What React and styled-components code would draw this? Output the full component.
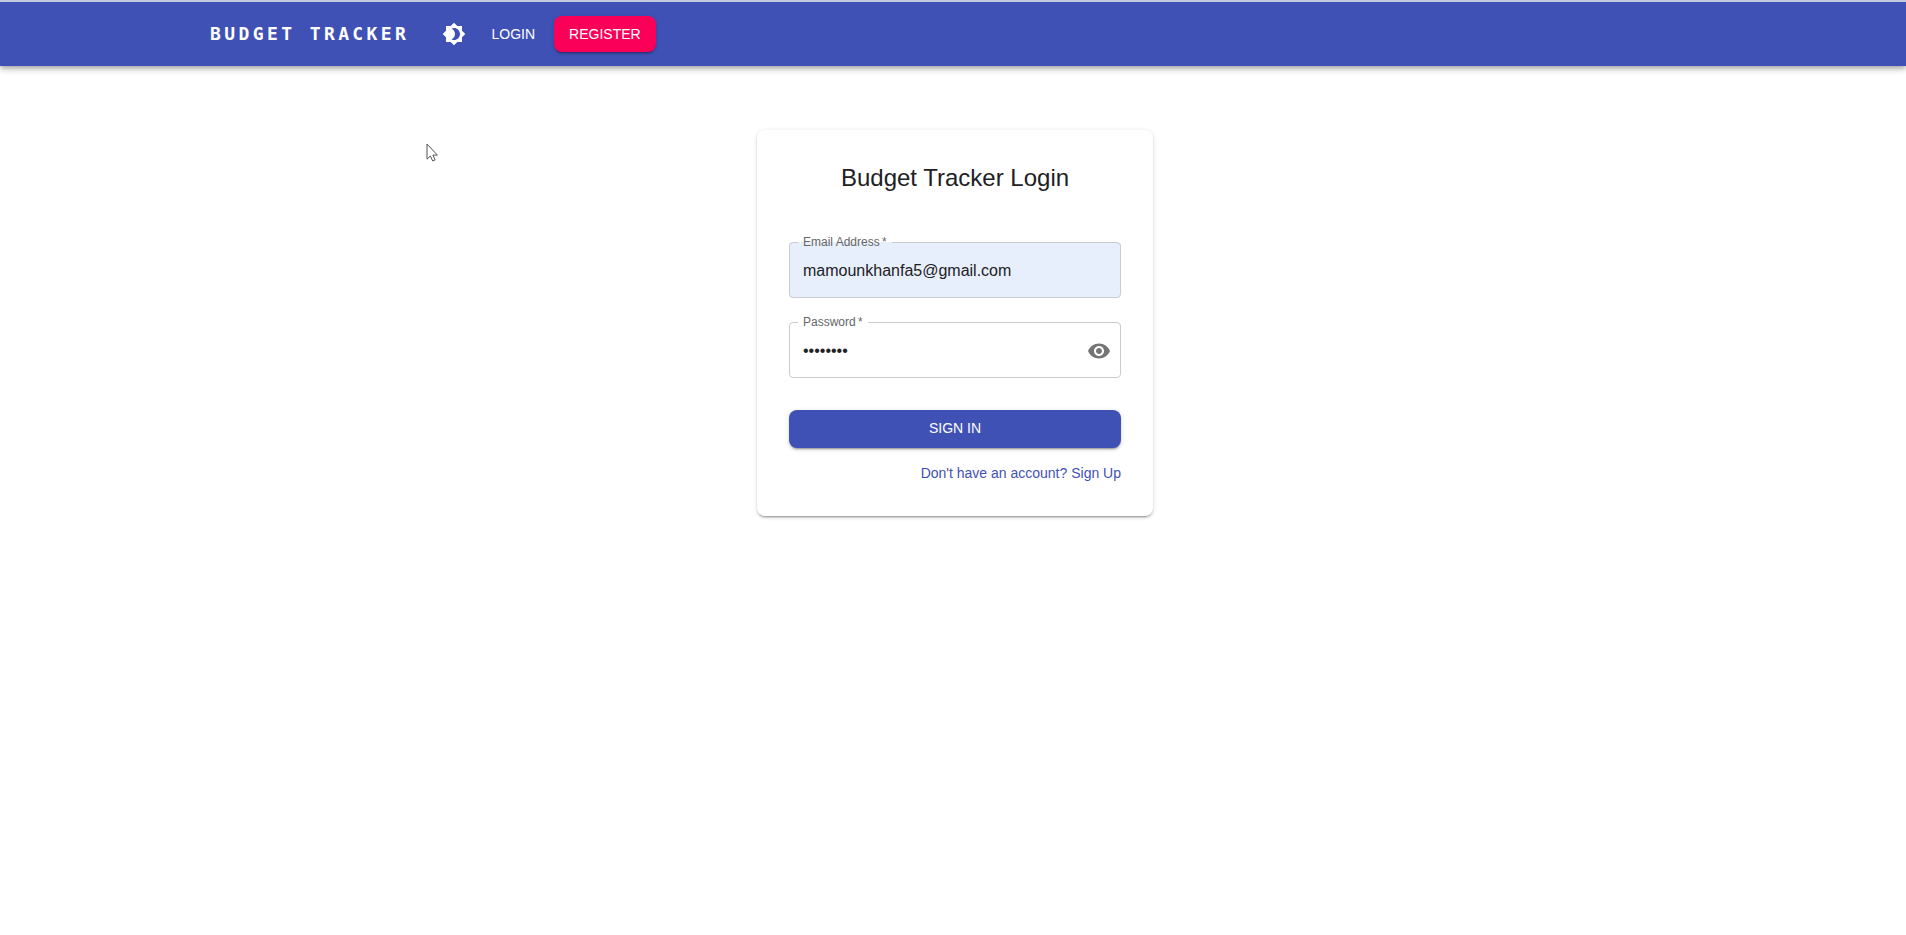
import React, { useState } from 'react'
import styled, { createGlobalStyle, ThemeProvider } from 'styled-components'
import { MdBrightness4, MdVisibility } from 'react-icons/md'

const theme = {
    colors: {
        primary: '#3f51b5',
        secondary: '#fb0058',
        text: '#212124',
        label: '#666668',
        border: '#c9cbd0',
        autofill: '#e8effc',
    },
    fonts: {
        body: '"Liberation Sans", Arial, sans-serif',
        logo: '"DejaVu Sans Mono", monospace',
    },
    shadow: '0 3px 1px -2px rgba(0, 0, 0, .2), 0 2px 2px rgba(0, 0, 0, .14), 0 1px 5px rgba(0, 0, 0, .12)',
}

const App = () => {
    return (
        <ThemeProvider theme={theme}>
            <GlobalStyle />
            <NavBar />
            <Main>
                <LoginForm />
            </Main>
            <Cursor viewBox="0 0 12 19">
                <path d="M1 1v15.2l3.4-3.2 2.3 5 2.4-1.1-2.2-4.8h4.5z" />
            </Cursor>
        </ThemeProvider>
    )
}

const NavBar = () => {
    return (
        <Header>
            <Logo>BUDGET TRACKER</Logo>
            <IconButton aria-label="theme"><MdBrightness4 /></IconButton>
            <NavButton>LOGIN</NavButton>
            <RegisterButton>REGISTER</RegisterButton>
        </Header>
    )
}

const LoginForm = () => {
    const [email, setEmail] = useState('mamounkhanfa5@gmail.com')
    const [password, setPassword] = useState('password')
    return (
        <Card onSubmit={e => e.preventDefault()}>
            <Title>Budget Tracker Login</Title>
            <Field $filled>
                <Label>Email Address&thinsp;*</Label>
                <Input value={email} onChange={e => setEmail(e.target.value)} />
            </Field>
            <Field>
                <Label>Password&thinsp;*</Label>
                <InputRow>
                    <Input type="password" value={password} onChange={e => setPassword(e.target.value)} />
                    <EyeButton type="button" aria-label="show"><MdVisibility /></EyeButton>
                </InputRow>
            </Field>
            <SubmitButton>SIGN IN</SubmitButton>
            <SignUpLink>Don't have an account? Sign Up</SignUpLink>
        </Card>
    )
}

const GlobalStyle = createGlobalStyle`
    * {
        box-sizing: border-box;
    }
    body {
        margin: 0;
        background: #fff;
        font-family: ${props => props.theme.fonts.body};
        color: ${props => props.theme.colors.text};
    }
`

const Header = styled.header`
    display: flex;
    align-items: center;
    height: 66px;
    padding-left: 210px;
    border-top: 2px solid #c5c9de;
    background: ${props => props.theme.colors.primary};
    box-shadow: 0 2px 4px -1px rgba(0, 0, 0, .2), 0 4px 5px rgba(0, 0, 0, .14), 0 1px 10px rgba(0, 0, 0, .12);
`

const Logo = styled.div`
    width: 223.5px;
    font-family: ${props => props.theme.fonts.logo};
    font-size: 18px;
    font-weight: 700;
    line-height: 28px;
    letter-spacing: 3.4px;
    white-space: nowrap;
    color: #fff;
`

const Button = styled.button`
    height: 36.5px;
    padding: 0 16px;
    border: 0;
    border-radius: 8px;
    background: transparent;
    font-family: inherit;
    font-size: 14px;
    line-height: 24.5px;
    color: #fff;
    cursor: pointer;
`

const IconButton = styled.button`
    display: flex;
    padding: 8px;
    border: 0;
    background: transparent;
    font-size: 24px;
    color: #fff;
`

const EyeButton = styled(IconButton)`
    color: #757575;
`

const NavButton = styled(Button)`
    padding: 0 18px 0 17px;
    margin-left: 1px;
`

const RegisterButton = styled(Button)`
    padding: 0 15.5px;
    margin-left: 0.5px;
    background: ${props => props.theme.colors.secondary};
    box-shadow: ${props => props.theme.shadow};
`

const Main = styled.main`
    display: flex;
    justify-content: center;
    align-items: flex-start;
    min-height: calc(100vh - 66px);
    padding: 64px 0 0 4px;
`

const Card = styled.form`
    display: flex;
    flex-direction: column;
    width: 396px;
    height: 385.5px;
    padding: 31px 32px 32px;
    border-radius: 8px;
    background: #fff;
    box-shadow: ${props => props.theme.shadow};
`

const Title = styled.h1`
    margin: 1px 0 42px;
    font-size: 24px;
    font-weight: 400;
    line-height: 32px;
    text-align: center;
`

const Field = styled.fieldset`
    min-width: 0;
    height: 62px;
    margin: 0 0 18px;
    padding: 0 0 0 8px;
    border: 1px solid ${props => props.theme.colors.border};
    border-radius: 4px;
    background: ${props => props.$filled ? props.theme.colors.autofill : 'transparent'};
`

const Label = styled.legend`
    padding: 0 5px;
    font-size: 12px;
    line-height: 13px;
    color: ${props => props.theme.colors.label};
`

const InputRow = styled.div`
    display: flex;
    align-items: center;
    padding-right: 1px;
`

const Input = styled.input`
    flex: 1;
    width: 100%;
    min-width: 0;
    height: 44px;
    padding: 0 5px;
    border: 0;
    outline: 0;
    background: transparent;
    font-family: inherit;
    font-size: 16px;
    color: ${props => props.theme.colors.text};
`

const SubmitButton = styled(Button)`
    margin-top: 14px;
    padding-bottom: 1px;
    flex-shrink: 0;
    height: 37.5px;
    background: ${props => props.theme.colors.primary};
    box-shadow: ${props => props.theme.shadow};
`

const SignUpLink = styled.a`
    align-self: flex-end;
    margin-top: 15px;
    font-size: 14px;
    line-height: 20px;
    color: ${props => props.theme.colors.primary};
`

const Cursor = styled.svg`
    position: absolute;
    left: 426px;
    top: 143px;
    width: 12px;
    height: 19px;
    fill: #fff;
    stroke: #55555c;
`

export default App
